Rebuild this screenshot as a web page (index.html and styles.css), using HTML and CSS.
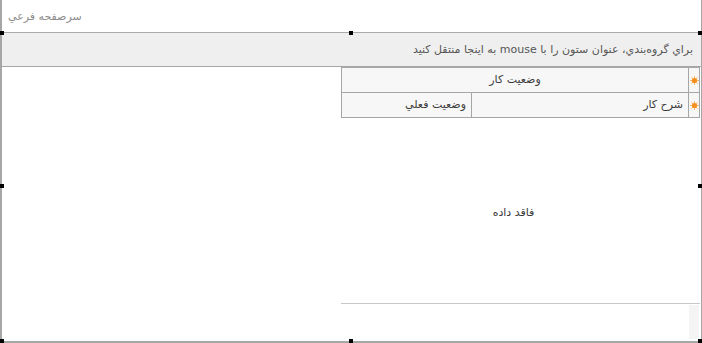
FILE: index.html
```html
<!DOCTYPE html>
<html lang="fa">
<head>
    <meta charset="UTF-8">
    <title>سرصفحه فرعي</title>
    <link rel="stylesheet" href="styles.css">
</head>
<body>
    <div class="window">
        <div class="title-bar"><span dir="rtl">سرصفحه فرعي</span></div>

        <div class="group-panel" dir="rtl">براي گروه‌بندي، عنوان ستون را با mouse به اينجا منتقل كنيد</div>

        <div class="content">
            <div class="blank"></div>

            <div class="grid">
                <div class="grid-header" dir="ltr">
                    <div class="cell cell-center span-2" dir="rtl">وضعيت کار</div>
                    <div class="cell cell-ind"><svg class="star" width="9" height="9" viewBox="0 0 9 9"><g stroke="#fbb56a" stroke-width="1"><line x1="4.5" y1="0" x2="4.5" y2="9"/><line x1="0" y1="4.5" x2="9" y2="4.5"/><line x1="1.3" y1="1.3" x2="7.7" y2="7.7"/><line x1="7.7" y1="1.3" x2="1.3" y2="7.7"/></g><circle cx="4.5" cy="4.5" r="2.6" fill="#f7901e"/></svg></div>
                    <div class="cell" dir="rtl">وضعيت فعلي</div>
                    <div class="cell" dir="rtl">شرح کار</div>
                    <div class="cell cell-ind"><svg class="star" width="9" height="9" viewBox="0 0 9 9"><g stroke="#fbb56a" stroke-width="1"><line x1="4.5" y1="0" x2="4.5" y2="9"/><line x1="0" y1="4.5" x2="9" y2="4.5"/><line x1="1.3" y1="1.3" x2="7.7" y2="7.7"/><line x1="7.7" y1="1.3" x2="1.3" y2="7.7"/></g><circle cx="4.5" cy="4.5" r="2.6" fill="#f7901e"/></svg></div>
                </div>

                <div class="empty-rows" dir="rtl">فاقد داده</div>

                <div class="grid-footer">
                    <div class="footer-corner"></div>
                </div>
            </div>
        </div>

        <!-- selection handles -->
        <span class="handle h-tl"></span>
        <span class="handle h-tm"></span>
        <span class="handle h-tr"></span>
        <span class="handle h-ml"></span>
        <span class="handle h-mr"></span>
        <span class="handle h-bl"></span>
        <span class="handle h-bm"></span>
        <span class="handle h-br"></span>
    </div>
</body>
</html>
```

FILE: styles.css
```css
body {
    margin: 0;
    font-family: "DejaVu Sans", sans-serif;
    font-size: 11px;
    color: #3a3a3a;
    background: #fff;
}

.window {
    position: relative;
    width: 699px;
    height: 341px;
    border-left: 2px solid #a6a6a6;
    border-right: 1px solid #a6a6a6;
    border-bottom: 2px solid #a6a6a6;
    display: flex;
    flex-direction: column;
    background: #fff;
}

.title-bar {
    height: 32px;
    line-height: 33px;
    padding-left: 6px;
    color: #8c8c8c;
    flex: none;
}

.group-panel {
    height: 33px;
    line-height: 33px;
    padding-right: 8px;
    background: #efefef;
    border-top: 1px solid #aaa;
    border-bottom: 1px solid #a6a6a6;
    color: #555;
    flex: none;
}

.content {
    flex: 1;
    display: flex;
}

.blank {
    flex: 1;
}

.grid {
    width: 360px;
    display: flex;
    flex-direction: column;
}

.grid-header {
    display: grid;
    grid-template-columns: 129px 216px 10px;
    grid-template-rows: 24px 24px;
    gap: 1px;
    padding: 1px;
    width: 357px;
    background: #a6a6a6;
}

.cell {
    background: #f7f7f7;
    line-height: 24px;
    padding-right: 5px;
    white-space: nowrap;
}

.cell-center {
    text-align: center;
    padding-right: 0;
}

.span-2 {
    grid-column: span 2;
}

.cell-ind {
    padding: 0;
    display: flex;
    align-items: center;
    justify-content: center;
}

.empty-rows {
    flex: 1;
    display: flex;
    align-items: center;
    justify-content: center;
    padding: 4px 14px 0 0;
    border-bottom: 1px solid #c8c8c8;
    margin-right: 1px;
}

.grid-footer {
    height: 34px;
    display: flex;
    justify-content: flex-end;
    padding: 1px 2px 2px 0;
}

.footer-corner {
    width: 10px;
    background: #f4f4f4;
}

/* selection handles */
.handle {
    position: absolute;
    width: 4px;
    height: 4px;
    background: #000;
}

.h-tl { left: -2px; top: 31px; }
.h-tm { left: 347px; top: 31px; }
.h-tr { right: -1px; top: 31px; }
.h-ml { left: -2px; top: 184px; }
.h-mr { right: -1px; top: 184px; }
.h-bl { left: -2px; bottom: -2px; }
.h-bm { left: 347px; bottom: -2px; }
.h-br { right: -1px; bottom: -2px; }
```
